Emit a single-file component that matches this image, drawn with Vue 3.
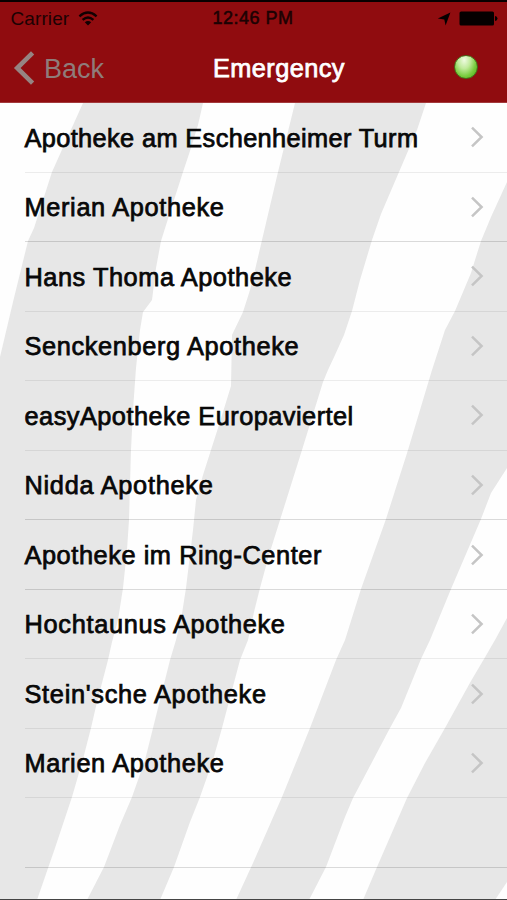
<script setup>
const pharmacies = [
  { name: 'Apotheke am Eschenheimer Turm', line: 'soft', tracking: 0.37 },
  { name: 'Merian Apotheke', line: 'crisp', tracking: 0.65 },
  { name: 'Hans Thoma Apotheke', line: 'soft', tracking: 0.54 },
  { name: 'Senckenberg Apotheke', line: 'soft', tracking: 0.63 },
  { name: 'easyApotheke Europaviertel', line: 'soft', tracking: 0.47 },
  { name: 'Nidda Apotheke', line: 'crisp', tracking: 0.72 },
  { name: 'Apotheke im Ring-Center', line: 'crisp', tracking: 0.56 },
  { name: 'Hochtaunus Apotheke', line: 'soft', tracking: 0.69 },
  { name: "Stein'sche Apotheke", line: 'soft', tracking: 0.7 },
  { name: 'Marien Apotheke', line: 'soft', tracking: 0.65 },
]
</script>

<template>
  <div class="screen">
    <header class="top">
      <div class="status">
        <div class="side">
          <span class="carrier">Carrier</span>
          <svg class="wifi" viewBox="0 0 20 15" width="20" height="15">
            <path d="M1.4 5.3Q10-2.3 18.6 5.3" />
            <path d="M4.6 8.9Q10 4 15.4 8.9" />
            <path class="solid" d="M6.8 11.2Q10 8.6 13.2 11.2L10 14.4Z" />
          </svg>
        </div>
        <span class="clock">12:46 PM</span>
        <div class="side right">
          <svg class="arrow" viewBox="0 0 14 14" width="14" height="14">
            <path d="M13.4.6 8.6 13.4 7.3 7.6.8 6.5Z" />
          </svg>
          <svg class="battery" viewBox="0 0 39 15" width="39" height="15">
            <rect x=".5" y=".5" width="34.5" height="14" rx="1.6" />
            <path d="M36 5Q38.5 5.4 38.5 7.5T36 10Z" />
          </svg>
        </div>
      </div>
      <nav class="nav">
        <div class="back">
          <svg viewBox="0 0 22 34" width="22" height="34">
            <path d="M19.6 1.8 4.2 17 19.6 32.2" />
          </svg>
          <span>Back</span>
        </div>
        <h1>Emergency</h1>
        <div class="indicator"><i class="lamp"></i></div>
      </nav>
    </header>

    <main class="content">
      <svg class="stripes" viewBox="0 103 507 797" width="507" height="797">
        <path d="M83 103 65 143 52 172 34 228 28 241 13 302 0 357V900H37L55 848 72 797 83 759 91 728 97 702 108 660 112 642 118 620 123 588 127 550 129 520 131 450 133 410 136 368 140 330 143 312 152 300 156 268 161 241 167 222 173 203 183 172 190 151 198 125 203 103Z" />
        <path d="M295 103 278 172 262 240 255 270 250 290 243 312 232 335 231 386 219 425 211 450 203 475 196 500 193 530 186 588 181 620 176 640 170 660 162 692 153 728 145 760 132 797 120 825 104 867 87 900H160L174 867 190 822 200 797 213 760 222 728 240 660 248 640 254 612 260 588 269 555 280 520 302 450 323 382 328 370 335 355 344 335 352 311 360 280 372 240 381 214 399 172 417 130 426 103Z" />
        <path d="M507 182 491 217 481 241 475 260 471 273 455 311 445 330 432 370 408 450 386 519 361 589 345 640 336 660 310 728 282 797 253 863 236 900H309L326 867 345 817 353 798 361 783 390 728 401 708 421 659 430 640 451 589 481 519 491 493 507 468Z" />
        <path d="M507 618 495 640 484 659 471 681 445 728 425 763 407 798 377 867 363 900H495L507 882Z" />
      </svg>
      <ul class="list">
        <li v-for="p in pharmacies" :key="p.name" :class="['row', p.line]">
          <span class="name" :style="{ letterSpacing: p.tracking + 'px' }">{{ p.name }}</span>
          <svg viewBox="0 0 14 22" width="14" height="22">
            <path d="M2 1.6 11.6 11 2 20.4" />
          </svg>
        </li>
        <li class="row crisp"></li>
      </ul>
    </main>
  </div>
</template>

<style>
body {
  margin: 0;
}
</style>

<style scoped>
.screen {
  width: 507px;
  height: 900px;
  box-sizing: border-box;
  display: flex;
  flex-direction: column;
  overflow: hidden;
  border-bottom: 1px solid #444;
  background: #fefefe;
  font-family: 'Liberation Sans', Arial, sans-serif;
}
.top {
  height: 103px;
  flex: none;
  box-sizing: border-box;
  border-top: 2px solid #080000;
  border-bottom: 1px solid #a33a3c;
  background: #900c0f;
}
.status {
  height: 33px;
  padding: 0 9px 0 10.5px;
  display: grid;
  grid-template-columns: 202px auto 1fr;
  align-items: center;
  color: #1c0203;
  font-size: 19px;
}
.side {
  display: flex;
  align-items: center;
  gap: 9px;
}
.right {
  justify-content: flex-end;
  gap: 8px;
}
.carrier {
  letter-spacing: 0.1px;
}
.clock {
  font-size: 18px;
  letter-spacing: 0.5px;
  -webkit-text-stroke: 0.55px #1c0203;
}
.wifi {
  fill: none;
  stroke: #120102;
  stroke-width: 2.3;
}
.wifi .solid {
  fill: #120102;
  stroke: none;
}
.arrow,
.battery {
  fill: #050000;
}
.nav {
  height: 66px;
  display: grid;
  grid-template-columns: 200px auto 1fr;
  align-items: center;
  padding: 0 29px 0 13px;
}
.back {
  display: flex;
  align-items: center;
  gap: 9px;
  color: #8f7c7a;
  font-size: 27px;
}
.back span {
  padding-top: 2px;
}
.back svg {
  fill: none;
  stroke: #968482;
  stroke-width: 4.6;
}
h1 {
  margin: 0;
  padding-top: 1px;
  color: #fff;
  font-size: 25.35px;
  font-weight: 400;
  letter-spacing: 0.4px;
  -webkit-text-stroke: 0.75px #fff;
}
.indicator {
  display: flex;
  justify-content: flex-end;
}
.lamp {
  width: 24px;
  height: 24px;
  margin-bottom: 2px;
  box-sizing: border-box;
  border: 1px solid #456e19;
  border-radius: 50%;
  background: radial-gradient(ellipse at 42% 18%, #effbe2 0%, #c0ea9b 34%, #78cc3e 64%, #43a90b 100%);
}
.content {
  position: relative;
  flex: 1;
}
.stripes {
  position: absolute;
  inset: 0;
  fill: #e7e7e7;
}
.list {
  position: relative;
  margin: 0;
  padding: 0 0 0 24.5px;
  list-style: none;
}
.row {
  height: 69.55px;
  box-sizing: border-box;
  padding-right: 23px;
  display: flex;
  align-items: center;
  justify-content: space-between;
  border-bottom: 1px solid rgba(0, 0, 0, 0.07);
  color: #080808;
  font-size: 25.35px;
}
.name {
  padding-top: 1.5px;
  -webkit-text-stroke: 0.75px #080808;
}
.row.crisp {
  border-bottom-color: rgba(0, 0, 0, 0.14);
}
.row svg {
  flex: none;
  fill: none;
  stroke: #c5c5c5;
  stroke-width: 2.5;
}
</style>
